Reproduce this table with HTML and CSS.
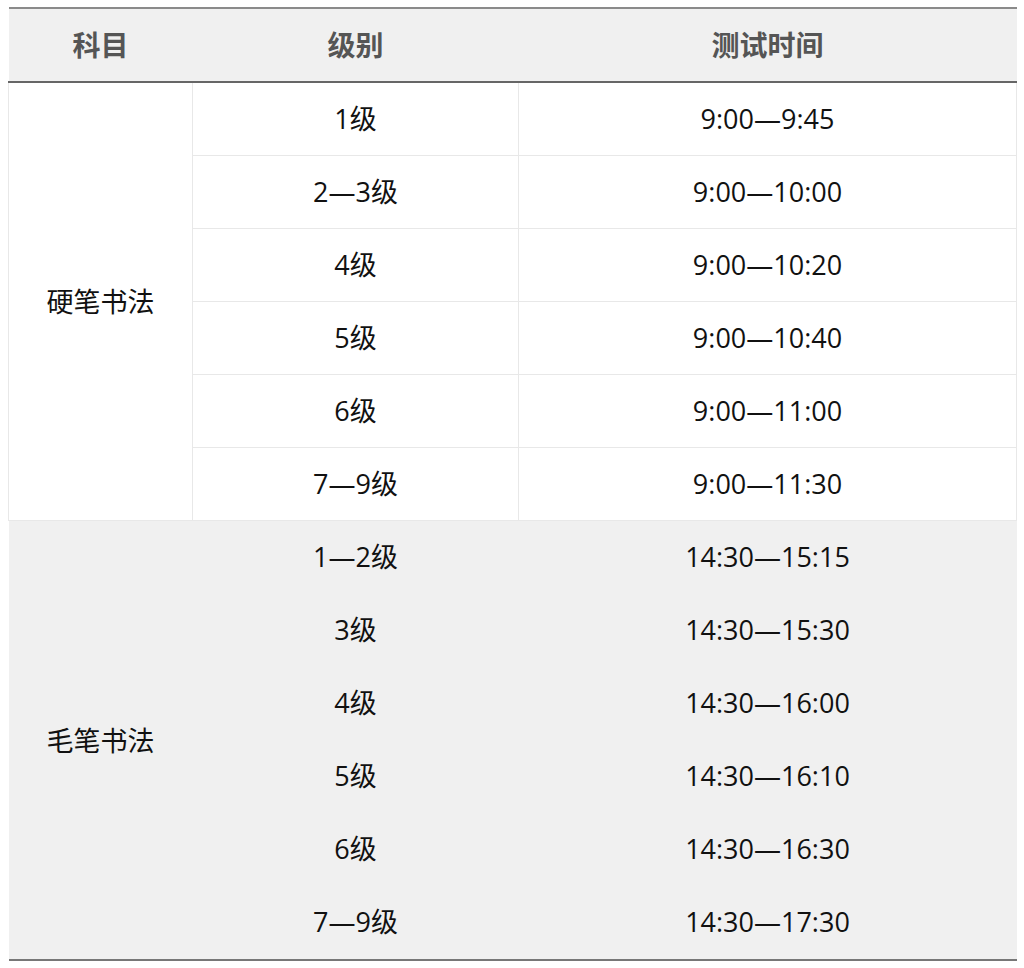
FILE: index.html
```html
<!DOCTYPE html>
<html lang="zh">
<head>
<meta charset="utf-8">
<link rel="stylesheet" href="styles.css">
</head>
<body>
<table class="sched">
  <thead>
    <tr><th class="c1">科目</th><th class="c2">级别</th><th class="c3">测试时间</th></tr>
  </thead>
  <tbody class="hard">
    <tr><td rowspan="6" class="subj">硬笔书法</td><td>1级</td><td>9:00—9:45</td></tr>
    <tr><td>2—3级</td><td>9:00—10:00</td></tr>
    <tr><td>4级</td><td>9:00—10:20</td></tr>
    <tr><td>5级</td><td>9:00—10:40</td></tr>
    <tr><td>6级</td><td>9:00—11:00</td></tr>
    <tr><td>7—9级</td><td>9:00—11:30</td></tr>
  </tbody>
  <tbody class="brush">
    <tr><td rowspan="6" class="subj">毛笔书法</td><td>1—2级</td><td>14:30—15:15</td></tr>
    <tr><td>3级</td><td>14:30—15:30</td></tr>
    <tr><td>4级</td><td>14:30—16:00</td></tr>
    <tr><td>5级</td><td>14:30—16:10</td></tr>
    <tr><td>6级</td><td>14:30—16:30</td></tr>
    <tr><td>7—9级</td><td>14:30—17:30</td></tr>
  </tbody>
</table>
</body>
</html>
```

FILE: styles.css
```css
html, body {
  margin: 0;
  padding: 0;
  background: #ffffff;
}
body {
  padding: 7px 8px 0 8px;
  font-family: "Open Sans", "Noto Sans CJK SC", sans-serif;
  color: #111111;
}
.sched {
  width: 1008px;
  border-collapse: collapse;
  table-layout: fixed;
  border-top: 2px solid #8a8a8a;
  border-bottom: 2px solid #777777;
}
.sched th, .sched td {
  text-align: center;
  vertical-align: middle;
  padding: 0;
  height: 72px;
  font-size: 27px;
  line-height: 1.2;
}
.sched thead th {
  background: #f0f0f0;
  color: #555555;
  font-family: "Noto Sans CJK SC", sans-serif;
  font-weight: 700;
  font-size: 28px;
  height: 72px;
  border-bottom: 2px solid #666666;
}
.sched .c1 { width: 184px; }
.sched .c2 { width: 326px; }
.sched .c3 { width: 498px; }
.hard td {
  border: 1px solid #e8e8e8;
  background: #ffffff;
}
.hard tr:first-child td {
  border-top: none;
}
.brush td {
  background: #f0f0f0;
  border: none;
  height: 73px;
}
.subj {
  font-family: "Noto Sans CJK SC", sans-serif;
}
```
